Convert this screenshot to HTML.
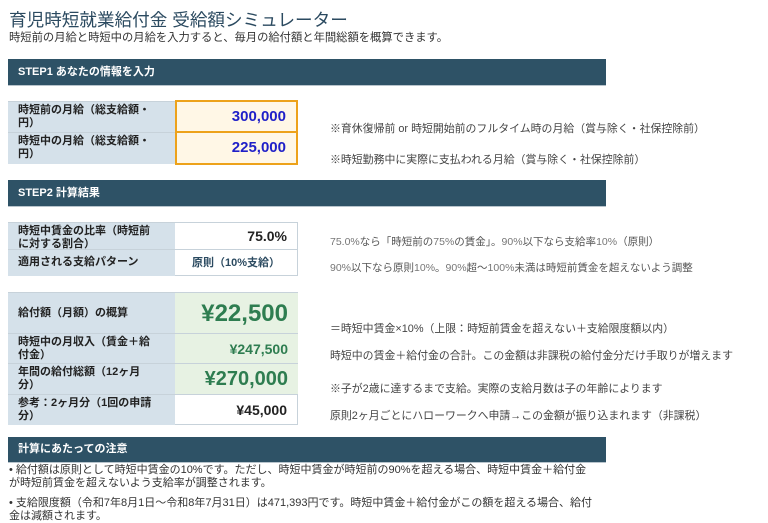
<!DOCTYPE html>
<html><head><meta charset="utf-8"><style>
body{margin:0;background:#fff;font-family:"Liberation Sans","Noto Sans CJK JP",sans-serif;color:#333;width:768px;height:522px;overflow:hidden;position:relative}
.a{position:absolute;white-space:nowrap}
.bar{position:absolute;left:8px;width:598px;background:#2e5266;color:#fff;font-weight:bold;font-size:11px;box-sizing:border-box;padding-left:10px;border-bottom:1px solid #b8c4cc}
.lab{position:absolute;left:8px;width:167px;background:#d5e1ea;font-weight:bold;font-size:11px;line-height:13px;box-sizing:border-box;padding:2px 0 0 10px;color:#222;border-top:1px solid #c7d2da}
.val{position:absolute;left:175px;width:123px;box-sizing:border-box;text-align:right;padding-right:10px;font-weight:bold;border-top:1px solid #c7d2da}
.y{background:#fff7e6;border:2px solid #eda21a;color:#1f1fc8;font-size:15px}
.g{background:#e7f2e3;color:#2e7d50}
.w{background:#fff;border-right:1px solid #c7d2da}
.n{font-size:10.9px;color:#444}
.sm{font-size:10.5px;color:#555}
</style></head><body>
<div class="a" style="left:9px;top:7px;font-size:17.6px;color:#2b4a60">育児時短就業給付金 受給額シミュレーター</div>
<div class="a" style="left:9px;top:29px;font-size:11.3px;color:#333">時短前の月給と時短中の月給を入力すると、毎月の給付額と年間総額を概算できます。</div>

<div class="bar" style="top:59px;height:27px;line-height:26px">STEP1 あなたの情報を入力</div>
<div class="lab" style="top:101px;height:31px">時短前の月給（総支給額・<br>円）</div>
<div class="lab" style="top:132px;height:32px">時短中の月給（総支給額・<br>円）</div>
<div class="val y" style="top:100px;height:33px;line-height:29px">300,000</div>
<div class="val y" style="top:131px;height:34px;line-height:30px">225,000</div>
<div class="a n" style="left:330px;top:120px">※育休復帰前 or 時短開始前のフルタイム時の月給（賞与除く・社保控除前）</div>
<div class="a n" style="left:330px;top:151px">※時短勤務中に実際に支払われる月給（賞与除く・社保控除前）</div>

<div class="bar" style="top:180px;height:27px;line-height:26px">STEP2 計算結果</div>
<div class="lab" style="top:222px;height:27px">時短中賃金の比率（時短前<br>に対する割合）</div>
<div class="lab" style="top:249px;height:27px;line-height:24px;padding-top:0">適用される支給パターン</div>
<div class="val w" style="top:222px;height:27px;line-height:27px;font-size:14px;color:#222">75.0%</div>
<div class="val w" style="top:249px;height:27px;line-height:26px;font-size:11px;color:#2b4a60;text-align:center;padding:0;border-bottom:1px solid #c7d2da">原則（10%支給）</div>
<div class="a sm" style="left:330px;top:234px"><span style="color:#777">75.0%</span>なら「時短前の<span style="color:#777">75%</span>の賃金」。<span style="color:#777">90%</span>以下なら支給率<span style="color:#777">10%</span>（原則）</div>
<div class="a sm" style="left:330px;top:260px"><span style="color:#777">90%</span>以下なら原則<span style="color:#777">10%</span>。<span style="color:#777">90%</span>超〜<span style="color:#777">100%</span>未満は時短前賃金を超えないよう調整</div>

<div class="lab" style="top:292px;height:41px;line-height:41px;padding-top:0">給付額（月額）の概算</div>
<div class="lab" style="top:333px;height:30px">時短中の月収入（賃金＋給<br>付金）</div>
<div class="lab" style="top:363px;height:31px">年間の給付総額（12ヶ月<br>分）</div>
<div class="lab" style="top:394px;height:31px">参考：2ヶ月分（1回の申請<br>分）</div>
<div class="val g" style="top:292px;height:41px;line-height:41px;font-size:24px;font-weight:bold">¥22,500</div>
<div class="val g" style="top:333px;height:30px;line-height:30px;font-size:14px">¥247,500</div>
<div class="val g" style="top:363px;height:31px;line-height:31px;font-size:20px;font-weight:bold">¥270,000</div>
<div class="val w" style="top:394px;height:31px;line-height:30px;font-size:14px;color:#222;border-bottom:1px solid #c7d2da">¥45,000</div>
<div class="a n" style="left:330px;top:320px">＝時短中賃金×10%（上限：時短前賃金を超えない＋支給限度額以内）</div>
<div class="a n" style="left:330px;top:347px">時短中の賃金＋給付金の合計。この金額は非課税の給付金分だけ手取りが増えます</div>
<div class="a n" style="left:330px;top:380px">※子が2歳に達するまで支給。実際の支給月数は子の年齢によります</div>
<div class="a n" style="left:330px;top:407px">原則2ヶ月ごとにハローワークへ申請→この金額が振り込まれます（非課税）</div>

<div class="bar" style="top:437px;height:26px;line-height:25px">計算にあたっての注意</div>
<div class="a" style="left:9px;top:464px;font-size:11px;line-height:13px;color:#333;white-space:normal;width:600px">• 給付額は原則として時短中賃金の10%です。ただし、時短中賃金が時短前の90%を超える場合、時短中賃金＋給付金<br>が時短前賃金を超えないよう支給率が調整されます。</div>
<div class="a" style="left:9px;top:497px;font-size:11px;line-height:13px;color:#333;white-space:normal;width:600px">• 支給限度額（令和7年8月1日〜令和8年7月31日）は471,393円です。時短中賃金＋給付金がこの額を超える場合、給付<br>金は減額されます。</div>
</body></html>
